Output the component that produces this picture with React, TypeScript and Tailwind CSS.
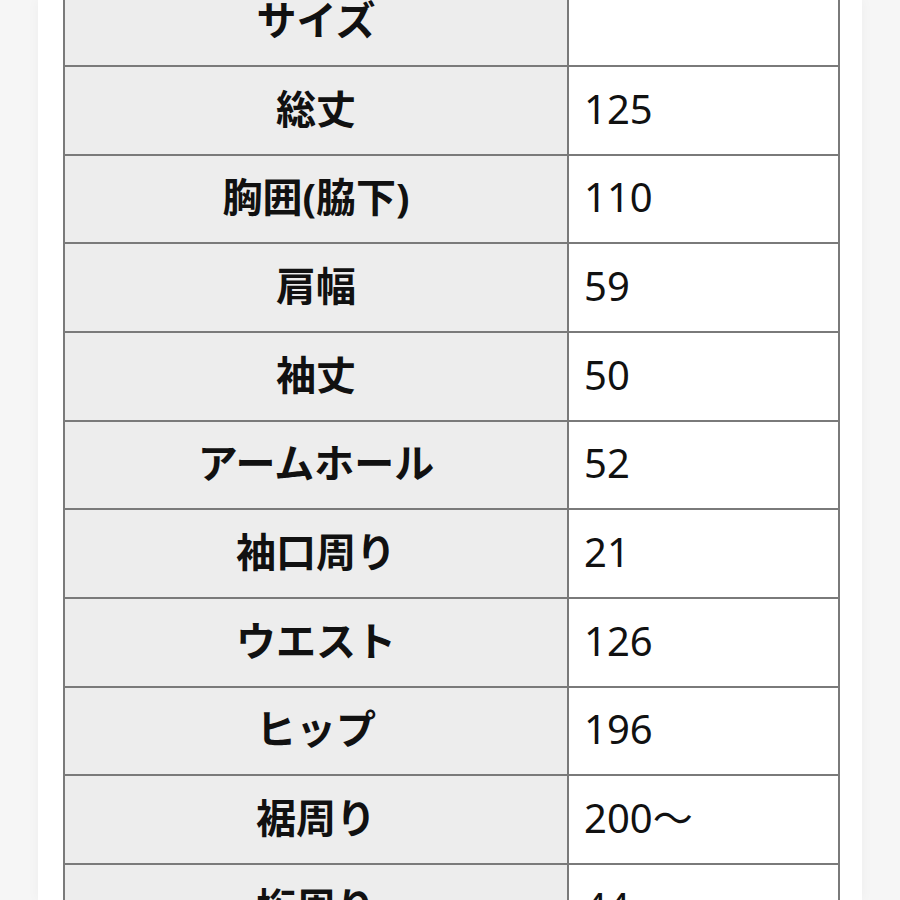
import React from "react";

const rows: [string, string][] = [
  ["サイズ", ""],
  ["総丈", "125"],
  ["胸囲(脇下)", "110"],
  ["肩幅", "59"],
  ["袖丈", "50"],
  ["アームホール", "52"],
  ["袖口周り", "21"],
  ["ウエスト", "126"],
  ["ヒップ", "196"],
  ["裾周り", "200〜"],
  ["裄周り", "44"],
];

export default function App() {
  return (
    <div
      className="h-[900px] w-[900px] overflow-hidden bg-[#f6f6f6]"
      style={{ fontFamily: '"Noto Sans", "Noto Sans CJK JP", sans-serif' }}
    >
      <div className="ml-[38px] h-[900px] w-[824px] overflow-hidden bg-white pl-[25px] pr-[22px] shadow-[0_0_12px_rgba(0,0,0,0.04)]">
        <div className="mt-[-21.67px] border-x-2 border-[#7a7a7a]">
          {rows.map(([k, v]) => (
            <div key={k} className="flex h-[88.67px] border-b-2 border-[#7a7a7a]">
              <div className="flex w-[504px] shrink-0 items-center justify-center border-r-2 border-[#7a7a7a] bg-[#ededed] pb-[3px] text-[40px] font-bold text-[#111]">
                {k}
              </div>
              <div className="flex flex-1 items-center pb-[3px] pl-[15px] text-[40px] text-[#111]">
                {v}
              </div>
            </div>
          ))}
        </div>
      </div>
    </div>
  );
}
